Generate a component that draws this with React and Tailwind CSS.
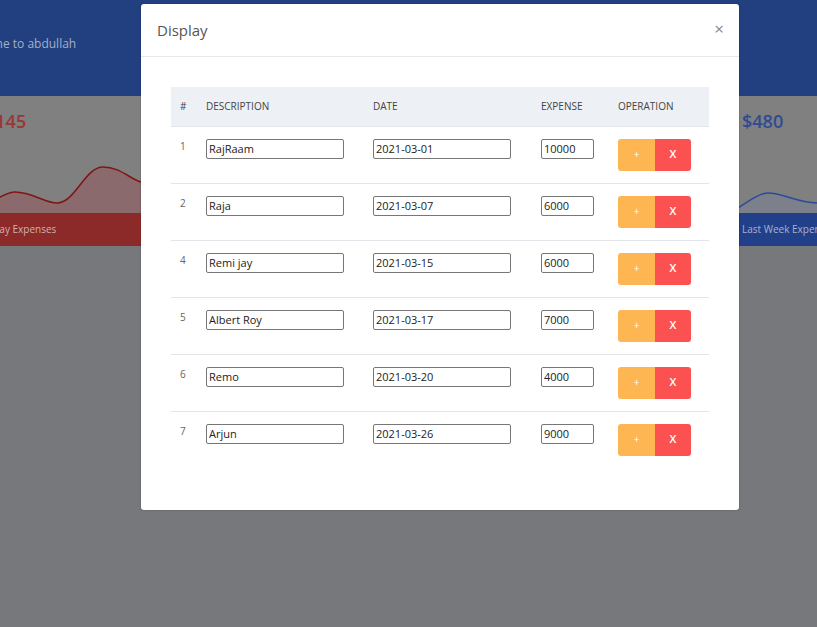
import React from "react";

const rows = [
  { n: 1, d: "RajRaam", t: "2021-03-01", e: "10000" },
  { n: 2, d: "Raja", t: "2021-03-07", e: "6000" },
  { n: 4, d: "Remi jay", t: "2021-03-15", e: "6000" },
  { n: 5, d: "Albert Roy", t: "2021-03-17", e: "7000" },
  { n: 6, d: "Remo", t: "2021-03-20", e: "4000" },
  { n: 7, d: "Arjun", t: "2021-03-26", e: "9000" },
];

function Field({ value, w }) {
  return (
    <input
      readOnly
      value={value}
      className={`${w} h-[20px] border border-[#767676] rounded-[2px] px-[2px] text-[11px] text-[#222] bg-white outline-none block`}
      style={{ fontFamily: '"Open Sans", sans-serif' }}
    />
  );
}

export default function App() {
  return (
    <div
      className="relative w-[817px] h-[627px] overflow-hidden bg-[#77787b]"
      style={{ fontFamily: '"Open Sans", "Noto Sans", sans-serif' }}
    >
      {/* background page (dimmed) */}
      <div className="h-[96px] bg-[#223f80] flex items-center">
        <div className="ml-[-42px] text-[12px] text-[#a6afc5] mt-[-8px] whitespace-nowrap">Welcome to abdullah</div>
      </div>
      <div className="flex">
        <div className="shrink-0 ml-[-150px] w-[420px] h-[150px] bg-[#808080] flex flex-col">
          <div className="h-[117px] relative">
            <div className="absolute left-[135px] top-[12px] text-[18px] font-semibold text-[#9b3636]">$145</div>
            <svg className="absolute left-0 bottom-0" width="420" height="60" viewBox="0 0 420 60">
              <path
                d="M0 52 C 100 52, 130 47, 150 44 C 156 41, 160 39, 165 39 C 182 39, 195 50, 207 50 C 225 50, 235 14, 253 14 C 270 14, 280 26, 291 29 L 420 40 L 420 60 L 0 60 Z"
                fill="#8a6a6c"
              />
              <path
                d="M0 52 C 100 52, 130 47, 150 44 C 156 41, 160 39, 165 39 C 182 39, 195 50, 207 50 C 225 50, 235 14, 253 14 C 270 14, 280 26, 291 29 L 420 40"
                fill="none"
                stroke="#7f1515"
                strokeWidth="1.5"
              />
            </svg>
          </div>
          <div className="h-[33px] bg-[#8c2a2a] flex items-center pl-[114px] text-[10px] text-[#cfb1b1] whitespace-nowrap">Yesterday Expenses</div>
        </div>
        <div className="shrink-0 ml-[468px] w-[300px] h-[150px] bg-[#808080] flex flex-col">
          <div className="h-[117px] relative">
            <div className="absolute left-[4px] top-[12px] text-[18px] font-semibold text-[#2f4b92]">$480</div>
            <svg className="absolute left-0 bottom-0" width="300" height="30" viewBox="0 0 300 30">
              <path d="M0 25 C 12 17, 22 10, 30 10 C 45 10, 60 20, 80 20 L 300 22 L 300 30 L 0 30 Z" fill="#7c808a" />
              <path d="M0 25 C 12 17, 22 10, 30 10 C 45 10, 60 20, 80 20 L 300 22" fill="none" stroke="#2a4a9a" strokeWidth="1.5" />
            </svg>
          </div>
          <div className="h-[33px] bg-[#22408a] flex items-center pl-[4px] text-[10px] text-[#a8b2ca] whitespace-nowrap">Last Week Expenses</div>
        </div>
      </div>

      {/* modal */}
      <div className="absolute inset-0">
        <div className="ml-[141px] mt-[4px] w-[598px] h-[506px] bg-white rounded-[3px] shadow-[0_0_2px_rgba(0,0,0,0.3)] flex flex-col">
          <div className="h-[53px] shrink-0 border-b border-[#e6e9ed] flex items-center justify-between pl-[16px] pr-[15px]">
            <span className="text-[15px] text-[#555] mt-[1px]">Display</span>
            <span className="text-[17px] leading-none text-[#888] mt-[-4px]">×</span>
          </div>
          <div className="pt-[30px] px-[30px]">
            <table className="w-[538px] border-collapse table-fixed">
              <colgroup>
                <col className="w-[26px]" />
                <col className="w-[167px]" />
                <col className="w-[168px]" />
                <col className="w-[77px]" />
                <col className="w-[100px]" />
              </colgroup>
              <thead>
                <tr className="h-[39px] bg-[#edf0f4] border-b border-[#e2e5ea] text-[10px] text-[#444] text-left">
                  <th className="font-normal pl-[9px]">#</th>
                  <th className="font-normal pl-[9px]">DESCRIPTION</th>
                  <th className="font-normal pl-[9px]">DATE</th>
                  <th className="font-normal pl-[9px]">EXPENSE</th>
                  <th className="font-normal pl-[9px]">OPERATION</th>
                </tr>
              </thead>
              <tbody>
                {rows.map((r, i) => (
                  <tr key={r.n} className={i > 0 ? "border-t border-[#e2e5ea]" : ""}>
                    <td className="align-top pl-[9px] pt-[12px] pb-[12px] text-[10px] text-[#666]">{r.n}</td>
                    <td className="align-top pl-[9px] pt-[12px]"><Field value={r.d} w="w-[138px]" /></td>
                    <td className="align-top pl-[9px] pt-[12px]"><Field value={r.t} w="w-[138px]" /></td>
                    <td className="align-top pl-[9px] pt-[12px]"><Field value={r.e} w="w-[53px]" /></td>
                    <td className="align-top pl-[9px] pt-[12px] pb-[12px]">
                      <div className="flex">
                        <button className="w-[37px] h-[32px] bg-[#fdb652] text-white text-[10px] rounded-l-[3px]">+</button>
                        <button className="w-[36px] h-[32px] bg-[#fc5151] text-white text-[11px] font-semibold rounded-r-[3px]">X</button>
                      </div>
                    </td>
                  </tr>
                ))}
              </tbody>
            </table>
          </div>
        </div>
      </div>
    </div>
  );
}
